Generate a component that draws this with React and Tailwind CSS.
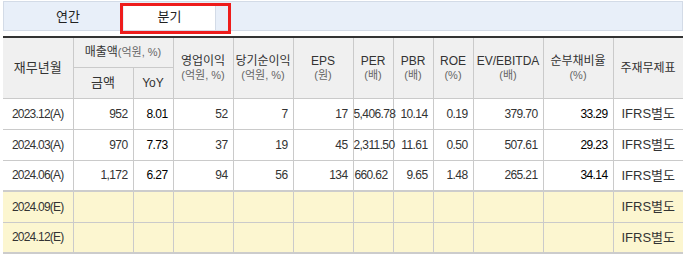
import React from 'react';

const KR = { fontFamily: '"Liberation Sans", "Noto Sans CJK KR", sans-serif' };

const widths = [70, 60, 40, 60, 60, 60, 40, 40, 40, 70, 70, 70];

const rows = [
  ['2023.12(A)', '952', '8.01', '52', '7', '17', '5,406.78', '10.14', '0.19', '379.70', '33.29'],
  ['2024.03(A)', '970', '7.73', '37', '19', '45', '2,311.50', '11.61', '0.50', '507.61', '29.23'],
  ['2024.06(A)', '1,172', '6.27', '94', '56', '134', '660.62', '9.65', '1.48', '265.21', '34.14'],
];

const estimates = ['2024.09(E)', '2024.12(E)'];

// columns printed darker in the picture
const strong = new Set([2, 10]);

function HeadCell({ title, unit, className = '' }) {
  return (
    <th
      rowSpan={2}
      className={`border-r border-b border-[#cacaca] font-normal text-[12px] leading-[14px] text-[#333] ${className}`}
    >
      <div>{title}</div>
      {unit && <div className="text-[11px] text-[#666]">{unit}</div>}
    </th>
  );
}

export default function App() {
  return (
    <div className="w-[683px] h-[260px] bg-white pl-[3px] pt-[1px] select-none" style={KR}>
      {/* tab bar */}
      <div className="relative h-[30px] border border-[#d3dbe7] bg-[#e8eff9] flex items-end pl-[18px] gap-[10px]">
        <div className="w-[92px] h-[26px] flex items-center justify-center text-[13px] text-[#222]">연간</div>
        <div className="w-[92px] h-[26px] flex items-center justify-center text-[13px] text-[#222] bg-white border-r border-[#d3dbe7]">
          분기
        </div>
        <div className="absolute left-[116px] top-[1px] w-[111px] h-[31px] border-[3px] border-[#ee1c1c]" />
      </div>

      {/* table */}
      <table className="mt-[5px] w-[680px] table-fixed border-collapse border-t-2 border-[#333]">
        <colgroup>
          {widths.map((w, i) => (
            <col key={i} style={{ width: w }} />
          ))}
        </colgroup>
        <thead className="bg-[#f0f0f0]">
          <tr className="h-[30px]">
            <th rowSpan={2} className="border-r border-b border-[#cacaca] font-normal text-[13px] text-[#333]">
              재무년월
            </th>
            <th colSpan={2} className="border-r border-b border-[#cacaca] font-normal text-[12px] text-[#333]">
              매출액<span className="text-[11px] text-[#666]">(억원, %)</span>
            </th>
            <HeadCell title="영업이익" unit="(억원, %)" />
            <HeadCell title="당기순이익" unit="(억원, %)" />
            <HeadCell title="EPS" unit="(원)" />
            <HeadCell title="PER" unit="(배)" />
            <HeadCell title="PBR" unit="(배)" />
            <HeadCell title="ROE" unit="(%)" />
            <HeadCell title="EV/EBITDA" unit="(배)" />
            <HeadCell title="순부채비율" unit="(%)" />
            <HeadCell title="주재무제표" />
          </tr>
          <tr className="h-[31px]">
            <th className="border-r border-b border-[#cacaca] font-normal text-[13px] text-[#333]">금액</th>
            <th className="border-r border-b border-[#cacaca] font-normal text-[12px] text-[#333]">YoY</th>
          </tr>
        </thead>
        <tbody>
          {rows.map((r, ri) => (
            <tr key={r[0]} className={`h-[31px] ${ri === rows.length - 1 ? 'border-b-2 border-[#cccccc]' : ''}`}>
              <td className="border-r border-b border-[#cacaca] pl-[9px] text-[12px] tracking-[-0.8px] text-[#333]">
                {r[0]}
              </td>
              {r.slice(1).map((v, i) => (
                <td
                  key={i}
                  className={`border-r border-b border-[#cacaca] pr-[5px] text-right text-[12px] tracking-[-0.6px] whitespace-nowrap overflow-visible ${
                    strong.has(i + 1) ? 'text-black' : 'text-[#333]'
                  }`}
                >
                  {v}
                </td>
              ))}
              <td className="border-b border-[#cacaca] text-center text-[13px] text-[#333]">IFRS별도</td>
            </tr>
          ))}
          {estimates.map((d, ri) => (
            <tr
              key={d}
              className={`h-[31px] bg-[#fcf6d0] ${ri === estimates.length - 1 ? 'border-b-2 border-[#cccccc]' : ''}`}
            >
              <td className="border-r border-b border-[#cacaca] pl-[9px] text-[12px] tracking-[-0.8px] text-[#333]">
                {d}
              </td>
              {Array.from({ length: 10 }).map((_, i) => (
                <td key={i} className="border-r border-b border-[#cacaca]" />
              ))}
              <td className="border-b border-[#cacaca] text-center text-[13px] text-[#333]">IFRS별도</td>
            </tr>
          ))}
        </tbody>
      </table>
    </div>
  );
}
